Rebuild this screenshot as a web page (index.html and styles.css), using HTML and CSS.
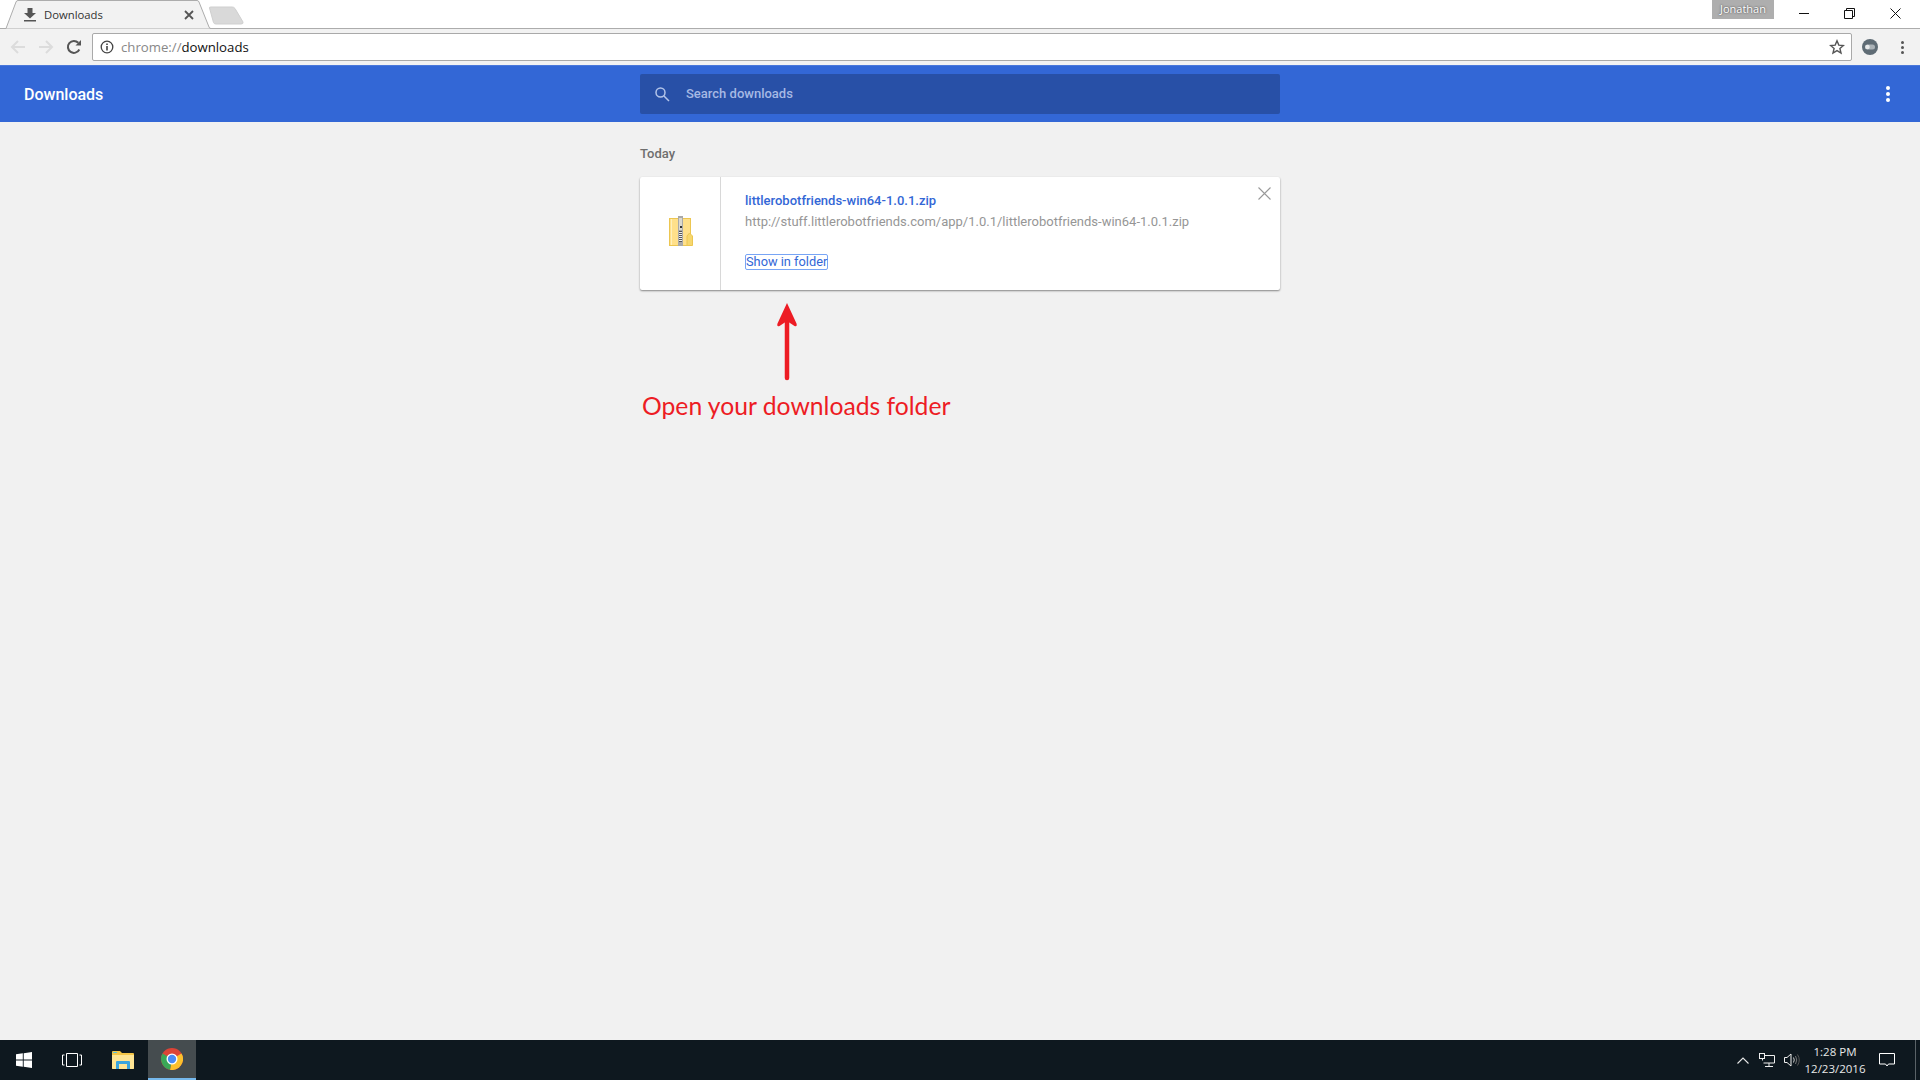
FILE: index.html
```html
<!DOCTYPE html>
<html lang="en">
<head>
<meta charset="utf-8">
<title>Downloads</title>
<link rel="stylesheet" href="styles.css">
</head>
<body>
<div class="window">
  <div class="tabstrip">
    <svg class="tab-shape" width="250" height="29" viewBox="0 0 250 29">
      <path d="M0 28.5H6L16 2Q16.500 .5 18 .5H197Q198.500 .5 199 2L209 27Q209.500 28.500 211 28.500" fill="#f2f2f2" stroke="#acacac"/>
      <path d="M209.500 8Q209 7 211 7H232Q234 7 235 8.500L243 22Q243.500 24 241 24H216Q214 24 213.500 22.500Z" fill="#d9d9d9" stroke="#cfcfcf"/>
    </svg>
    <div class="tab">
      <svg class="tab-icon" width="14" height="14" viewBox="0 0 14 14"><path d="M4.500 0H9.500V5H13L7 10.500L1 5H4.500ZM1 12H13V13.500H1Z" fill="#555"/></svg>
      <span class="tab-title">Downloads</span>
      <svg class="tab-close" width="10" height="10" viewBox="0 0 10 10"><path d="M1 1L9 9M9 1L1 9" stroke="#555" stroke-width="1.800"/></svg>
    </div>
    <div class="winbar">
      <div class="profile">Jonathan</div>
      <div class="winbtn"><svg width="11" height="11" viewBox="0 0 11 11"><path d="M0 5.500H10" stroke="#111"/></svg></div>
      <div class="winbtn"><svg width="11" height="11" viewBox="0 0 11 11"><path d="M.5 2.500H8.500V10.500H.5ZM2.500 2.500V.5H10.500V8.500H8.500" fill="none" stroke="#111"/></svg></div>
      <div class="winbtn"><svg width="11" height="11" viewBox="0 0 11 11"><path d="M.5 .5L10.500 10.500M10.500 .5L.5 10.500" stroke="#111"/></svg></div>
    </div>
  </div>

  <div class="toolbar">
    <div class="nav">
      <svg width="16" height="16" viewBox="0 0 16 16"><path d="M15 8H2M8 2L2 8L8 14" fill="none" stroke="#dcdcdc" stroke-width="2"/></svg>
      <svg width="16" height="16" viewBox="0 0 16 16"><path d="M1 8H14M8 2L14 8L8 14" fill="none" stroke="#dcdcdc" stroke-width="2"/></svg>
      <svg width="16" height="16" viewBox="0 0 16 16"><path d="M13.300 10.500A6 6 0 1 1 12.300 3.800" fill="none" stroke="#555" stroke-width="2"/><path d="M9.500 6.500H15V1Z" fill="#555"/></svg>
    </div>
    <div class="omnibox">
      <svg width="14" height="14" viewBox="0 0 14 14"><circle cx="7" cy="7" r="5.800" fill="none" stroke="#444" stroke-width="1.300"/><path d="M6.200 6H7.800V10.500H6.200ZM6.200 3.500H7.800V5H6.200Z" fill="#444"/></svg>
      <span class="url"><span class="url-scheme">chrome://</span>downloads</span>
      <svg class="star" width="16" height="16" viewBox="0 0 16 16"><path d="M8 1.800L9.800 6.100L14.400 6.500L10.900 9.500L12 14L8 11.600L4 14L5.100 9.500L1.600 6.500L6.200 6.100Z" fill="none" stroke="#555" stroke-width="1.400"/></svg>
    </div>
    <div class="ext">
      <svg width="18" height="18" viewBox="0 0 18 18"><circle cx="9" cy="9" r="8" fill="#5f6c75"/><rect x="4" y="6.500" width="10" height="5" rx="2.500" fill="#aab2b7"/><circle cx="6.500" cy="9" r="2.300" fill="#e8eaeb"/></svg>
      <div class="dots dots-dark"><i></i><i></i><i></i></div>
    </div>
  </div>

  <header class="header">
    <h1 class="page-title">Downloads</h1>
    <div class="search">
      <svg width="16" height="16" viewBox="0 0 16 16"><circle cx="6.500" cy="6.500" r="4.500" fill="none" stroke="#b4c5ea" stroke-width="1.500"/><path d="M10 10L15 15" stroke="#b4c5ea" stroke-width="1.500"/></svg>
      <span class="search-text">Search downloads</span>
    </div>
    <div class="header-menu"><div class="dots dots-light"><i></i><i></i><i></i></div></div>
  </header>

  <main class="main">
    <div class="column">
      <h2 class="date">Today</h2>
      <section class="card">
        <div class="file-cell">
          <svg width="24" height="30" viewBox="0 0 24 30" shape-rendering="crispEdges">
            <rect x="0.500" y="2.500" width="21" height="27" fill="#ffe08a" stroke="#ecc651"/>
            <rect x="2" y="3" width="1" height="26" fill="#fff0bb"/>
            <rect x="9" y="0" width="5" height="30" fill="#a9a9a9"/>
            <rect x="10" y="2" width="3" height="12" fill="#dbd8cf"/>
            <rect x="11" y="10" width="2" height="2" fill="#333"/>
            <rect x="10" y="15" width="3" height="1" fill="#555"/><rect x="10" y="16" width="3" height="1" fill="#eee"/><rect x="10" y="17" width="3" height="1" fill="#555"/><rect x="10" y="18" width="3" height="1" fill="#eee"/><rect x="10" y="19" width="3" height="1" fill="#555"/><rect x="10" y="20" width="3" height="1" fill="#eee"/><rect x="10" y="21" width="3" height="1" fill="#555"/><rect x="10" y="22" width="3" height="1" fill="#eee"/><rect x="10" y="23" width="3" height="1" fill="#555"/><rect x="10" y="24" width="3" height="1" fill="#eee"/><rect x="10" y="25" width="3" height="1" fill="#555"/>
            <path d="M18 29.500V20L20.500 17L23.500 20V29.500Z" fill="#f6d76e" stroke="#ecc651" shape-rendering="auto"/>
          </svg>
        </div>
        <div class="details">
          <a class="filename">littlerobotfriends-win64-1.0.1.zip</a>
          <div class="source">http://stuff.littlerobotfriends.com/app/1.0.1/littlerobotfriends-win64-1.0.1.zip</div>
          <a class="show-folder">Show in folder</a>
        </div>
        <svg class="card-close" width="13" height="13" viewBox="0 0 13 13"><path d="M.5 .5L12.500 12.500M12.500 .5L.5 12.500" stroke="#999" stroke-width="1.100"/></svg>
      </section>
      <svg class="arrow" width="24" height="80" viewBox="0 0 24 80"><path d="M12 76V8" stroke="#ed1c24" stroke-width="4.500" stroke-linecap="round"/><path d="M12 1L21.500 21.500Q22.500 25 19.500 24L12 19L4.500 24Q1.500 25 2.500 21.500Z" fill="#ed1c24"/></svg>
      <p class="annotation">Open your downloads folder</p>
    </div>
  </main>

  <footer class="taskbar">
    <div class="task-left">
      <div class="task-btn">
        <svg width="16" height="16" viewBox="0 0 16 16"><path d="M0 2.300L6.800 1.300V7.500H0ZM7.700 1.200L16 0V7.500H7.700ZM0 8.500H6.800V14.700L0 13.700ZM7.700 8.500H16V16L7.700 14.800Z" fill="#fff"/></svg>
      </div>
      <div class="task-btn task-view">
        <svg width="20" height="14" viewBox="0 0 20 14"><path d="M4.500 .5H15.500V13.500H4.500ZM2.500 2H.5V12H2.500M17.500 2H19.500V12H17.500" fill="none" stroke="#fff"/></svg>
      </div>
      <div class="task-btn task-files">
        <svg width="22" height="18" viewBox="0 0 22 18"><path d="M0 1Q0 0 1 0H8L10 2H21Q22 2 22 3V17Q22 18 21 18H1Q0 18 0 17Z" fill="#f5c648"/><path d="M0 4H22V17Q22 18 21 18H1Q0 18 0 17Z" fill="#ffe594"/><path d="M4 18V11Q4 10 5 10H17Q18 10 18 11V18H15V13H7V18Z" fill="#3aa5de"/><rect x="1" y="1" width="4" height="1" fill="#5fc4d8"/></svg>
      </div>
      <div class="task-btn task-active">
        <svg width="22" height="22" viewBox="0 0 22 22"><circle cx="11" cy="11" r="11" fill="#dc4437"/><path d="M11 11L20.500 5.500A11 11 0 0 1 9 21.800Z" fill="#fbc02d"/><path d="M11 11L9 21.800A11 11 0 0 1 1.500 5.500Z" fill="#3aa757"/><circle cx="11" cy="11" r="5.500" fill="#fff"/><circle cx="11" cy="11" r="4.200" fill="#4a8bf5"/></svg>
      </div>
    </div>
    <div class="tray">
      <svg class="tray-chevron" width="12" height="7" viewBox="0 0 12 7"><path d="M.5 6.500L6 1L11.500 6.500" fill="none" stroke="#e8e8e8" stroke-width="1.100"/></svg>
      <svg class="tray-net" width="16" height="14" viewBox="0 0 16 14"><path d="M5.500 2.500H15.500V10H4.500M10 10V13M6 13.500H14M3.500 7.500V3" fill="none" stroke="#eee"/><rect x=".5" y=".5" width="5" height="5" fill="#0e181f" stroke="#eee"/></svg>
      <svg class="tray-vol" width="17" height="14" viewBox="0 0 17 14"><path d="M.5 4.500H3L7 1V13L3 9.500H.5Z" fill="none" stroke="#eee"/><path d="M9.500 4.500Q11 7 9.500 9.500" fill="none" stroke="#ccc"/><path d="M11.500 3Q14 7 11.500 11" fill="none" stroke="#777"/><path d="M13.500 1.500Q17 7 13.500 12.500" fill="none" stroke="#555"/></svg>
      <div class="clock"><span>1:28 PM</span><span>12/23/2016</span></div>
      <svg class="notify" width="16" height="14" viewBox="0 0 16 14"><path d="M.5 .5H15.500V11H9.500L8 13L6.500 11H.5Z" fill="none" stroke="#fff"/></svg>
      <div class="show-desktop"></div>
    </div>
  </footer>
</div>
</body>
</html>
```
FILE: styles.css
```css
* { box-sizing: border-box; }
html, body { margin: 0; height: 100%; }
body { overflow: hidden; background: #f1f1f1; font-family: Roboto, "Liberation Sans", sans-serif; }
.window { width: 1920px; height: 1080px; display: flex; flex-direction: column; }

.tabstrip { height: 29px; flex: none; background: #fff; border-bottom: 1px solid #acacac; display: flex; position: relative; }
.tab-shape { position: absolute; left: 0; top: 0; }
.tab { position: relative; width: 200px; height: 28px; display: flex; align-items: center; padding-left: 23px; }
.tab-icon { flex: none; margin-top: 2px; }
.tab-title { margin-left: 7px; font: 11.300px "Open Sans", "Liberation Sans", sans-serif; color: #333; }
.tab-close { position: absolute; left: 184px; top: 10px; }
.winbar { margin-left: auto; display: flex; align-items: flex-start; position: relative; padding-right: 2px; }
.profile { width: 62px; height: 19px; margin-right: 7.500px; background: #aeaeae; color: #fff; font: 11px/17px "Open Sans", sans-serif; text-align: center; text-shadow: 0 0 2px #333; }
.winbtn { width: 45.500px; height: 28px; display: flex; align-items: flex-start; justify-content: center; padding-top: 8px; }

.toolbar { height: 36px; flex: none; background: #f2f2f2; display: flex; align-items: center; padding: 0 0 0 10px; }
.nav { display: flex; gap: 12px; width: 82px; align-items: center; }
.omnibox { width: 1760px; height: 28px; background: #fff; border: 1px solid #a9a9a9; border-radius: 2px; display: flex; align-items: center; padding: 0 6px 0 7px; }
.url { margin: -1px 0 0 7px; font: 13.200px "Open Sans", "Liberation Sans", sans-serif; color: #111; }
.url-scheme { color: #888; }
.star { margin-left: auto; }
.ext { display: flex; align-items: center; margin-left: 9px; }
.dots { display: flex; flex-direction: column; gap: 2px; }
.dots i { display: block; width: 3px; height: 3px; border-radius: 50%; }
.dots-dark i { background: #555; }
.dots-light i { background: #fff; width: 4px; height: 4px; }
.dots-dark { margin-left: 22px; }

.header { height: 57px; flex: none; background: #3367d6; display: grid; grid-template-columns: 1fr 640px 1fr; align-items: center; border-top: 1px solid #4a78db; }
.page-title { margin: 0; padding-left: 24px; font-size: 16px; font-weight: 500; color: #fff; }
.search { height: 40px; background: #2850a7; border-radius: 2px; display: flex; align-items: center; padding-left: 14px; }
.search-text { margin: -2px 0 0 16px; font-size: 13px; font-weight: 500; color: #a6b9e4; }
.header-menu { display: flex; justify-content: flex-end; padding-right: 30px; }

.main { flex: 1; min-height: 0; display: flex; justify-content: center; background: #f1f1f1; }
.column { width: 640px; }
.date { margin: 23px 0 15px; font-size: 13px; line-height: 17px; font-weight: 500; color: #6e6e6e; }
.card { position: relative; height: 113px; background: #fff; border-radius: 2px; box-shadow: 0 1px 2px rgba(0,0,0,.45); display: flex; }
.file-cell { width: 81px; flex: none; border-right: 1px solid #d8d8d8; display: flex; align-items: center; justify-content: center; padding: 0 0 5px 2px; }
.details { padding: 16px 0 0 24px; display: flex; flex-direction: column; align-items: flex-start; }
.filename { font-size: 13px; line-height: 16px; font-weight: 500; color: #3367d6; }
.source { margin-top: 5px; font-size: 13px; line-height: 16px; color: #969696; }
.show-folder { margin-top: 24px; height: 16px; padding: 0; font-size: 12.800px; line-height: 14px; color: #3367d6; border: 1px solid #78a5f5; border-radius: 2px; }
.card-close { position: absolute; right: 9px; top: 10px; }
.arrow { display: block; margin: 12px 0 0 135px; }
.annotation { margin: 8px 0 0 2px; font: 24.700px/32px Lato, "Open Sans", sans-serif; color: #ed1c24; }

.taskbar { height: 40px; flex: none; background: #0e181f; display: flex; justify-content: space-between; }
.task-left { display: flex; }
.task-btn { width: 48px; height: 40px; display: flex; align-items: center; justify-content: center; padding-bottom: 1px; }
.task-view { margin-right: 4px; }
.task-files { padding-right: 2px; }
.task-active { background: #454c4f; border-bottom: 2px solid #76b9ed; padding-bottom: 0; }
.tray { display: flex; align-items: center; color: #e8e8e8; }
.tray-chevron { margin-right: 10px; }
.tray-net { margin-right: 9px; }
.tray-vol { margin-right: 4px; }
.clock { width: 60px; display: flex; flex-direction: column; align-items: center; gap: 3px; font: 11.500px/14px "Open Sans", sans-serif; }
.notify { margin-left: 14px; }
.show-desktop { width: 1px; height: 40px; margin-left: 20px; margin-right: 4px; background: #5a6267; }
```
